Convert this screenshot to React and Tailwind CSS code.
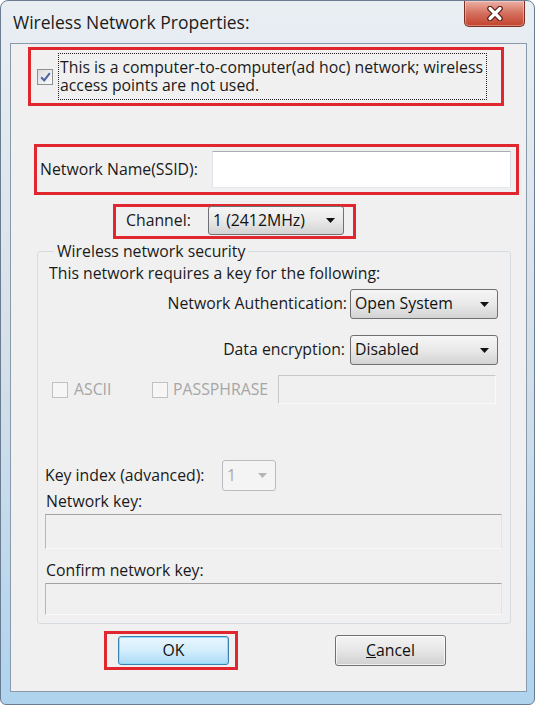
// App.jsx — Vista style "Wireless Network Properties" dialog

const red = "border-[3px] border-[#e0262e]";

function Check({ checked = false, disabled = false }) {
  return (
    <div
      className={`w-[16px] h-[16px] flex-shrink-0 border flex items-center justify-center ${
        disabled
          ? "border-[#c2c2c2] bg-[#f6f6f6]"
          : "border-[#8e8f8f] bg-linear-to-br from-[#dcdcdc] to-[#fbfbfb]"
      }`}
    >
      {checked && (
        <svg width="11" height="10" viewBox="0 0 11 10">
          <path d="M1.2 5.2l3 3.2L9.8 1.2" stroke="#4a62a6" strokeWidth="2" fill="none" />
        </svg>
      )}
    </div>
  );
}

function Combo({ value, className = "", disabled = false }) {
  return (
    <div
      className={`flex items-center justify-between rounded-[3px] border pl-[4px] pr-[8px] ${
        disabled
          ? "border-[#b9bdc1] bg-[#f4f4f4] text-[#a9a9a9]"
          : "border-[#707070] bg-linear-to-b from-[#f6f6f6] via-[#e9e9e9] to-[#d3d3d3] text-[#111]"
      } ${className}`}
    >
      <span className="leading-none">{value}</span>
      <svg width="9" height="5" viewBox="0 0 9 5">
        <path d="M0 0h9L4.5 5z" fill={disabled ? "#b4b4b4" : "#111"} />
      </svg>
    </div>
  );
}

function Field({ className = "" }) {
  return (
    <div
      className={`border border-t-[#a4a4a4] border-l-[#b6b6b6] border-r-[#e4e4e4] border-b-[#fafafa] bg-[#f0f0f0] ${className}`}
    />
  );
}

export default function App() {
  return (
    <div className="w-[538px] h-[712px] bg-white font-['Open_Sans',sans-serif] text-[15.8px] text-[#1a1a1a]">
      <div className="w-[535px] h-[705px] rounded-t-[8px] rounded-b-[6px] border border-[#6a7d90] bg-linear-to-b from-[#e9eef3] via-[#d6e0e9] to-[#afd3ee] flex flex-col">
        {/* title bar */}
        <div className="h-[42px] flex items-start justify-between">
          <div className="pl-[12px] pt-[9px] text-[17.5px] leading-[24px] text-[#1b1b1b]">
            Wireless Network Properties:
          </div>
          <div className="mr-[9px] w-[61px] h-[26px] rounded-b-[5px] border border-t-0 border-[#7c2e22] bg-linear-to-b from-[#eab0a4] via-[#d46e5c] to-[#c2422c] shadow-[inset_0_0_0_1px_rgba(255,255,255,0.35)] flex items-center justify-center">
            <svg width="18" height="15" viewBox="0 0 18 15">
              <path d="M4 2.5l10 10M14 2.5l-10 10" stroke="#5a1a12" strokeWidth="5.5" strokeLinecap="round" />
              <path d="M4 2.5l10 10M14 2.5l-10 10" stroke="#fff" strokeWidth="3.2" strokeLinecap="round" />
            </svg>
          </div>
        </div>

        {/* client area */}
        <div className="ml-[9px] w-[517px] h-[649px] border border-[#8799ab] bg-[#f0f0f0] flex flex-col">
          {/* ad hoc */}
          <div className={`ml-[17px] mt-[3px] w-[476px] h-[59px] ${red} flex items-center`}>
            <div className="ml-[6px]">
              <Check checked />
            </div>
            <div className="ml-[5px] w-[429px] h-[47px] border border-dotted border-[#222] pl-[1px] pt-[4px] leading-[18px]">
              This is a computer-to-computer(ad hoc) network; wireless access points are not used.
            </div>
          </div>

          {/* SSID */}
          <div className={`ml-[23px] mt-[38px] w-[485px] h-[51px] ${red} flex items-center`}>
            <span className="ml-[3px] w-[172px]">Network Name(SSID):</span>
            <div className="w-[299px] h-[37px] bg-white border border-[#abadb3] border-l-[#e2e3ea] border-r-[#dbdfe6] border-b-[#e3e9ef]" />
          </div>

          {/* channel */}
          <div className={`ml-[102px] mt-[9px] w-[243px] h-[35px] ${red} flex items-start`}>
            <span className="ml-[10px] mt-[2px] w-[82px]">Channel:</span>
            <Combo value="1 (2412MHz)" className="w-[136px] h-[29px] -mt-[1px]" />
          </div>

          {/* security group */}
          <fieldset className="ml-[26px] mt-[2px] w-[474px] border border-[#d5dbe0] rounded-[3px] pl-[7px] pr-[8px] pb-[8px] flex flex-col">
            <legend className="ml-[9px] px-[3px] leading-[20px]">Wireless network security</legend>
            <div className="ml-[4px] mt-[2px] leading-[20px]">This network requires a key for the following:</div>

            <div className="mt-[6px] flex items-center justify-end pr-[4px]">
              <span className="mr-[3px]">Network Authentication:</span>
              <Combo value="Open System" className="w-[148px] h-[30px]" />
            </div>
            <div className="mt-[16px] flex items-center justify-end pr-[4px]">
              <span className="mr-[5px]">Data encryption:</span>
              <Combo value="Disabled" className="w-[148px] h-[30px]" />
            </div>

            <div className="mt-[10px] flex items-center text-[#a6a6a6]">
              <div className="ml-[7px]">
                <Check disabled />
              </div>
              <span className="ml-[6px] w-[78px]">ASCII</span>
              <Check disabled />
              <span className="ml-[5px] w-[105px]">PASSPHRASE</span>
              <div className="w-[218px] h-[29px] border border-[#c8c8c8] border-b-[#fafafa] border-r-[#fafafa] bg-[#f0f0f0]" />
            </div>

            <div className="mt-[56px] flex items-center">
              <span className="w-[177px]">Key index (advanced):</span>
              <Combo value="1" disabled className="w-[54px] h-[31px]" />
            </div>
            <div className="ml-[1px] leading-[20px]">Network key:</div>
            <Field className="mt-[3px] h-[35px]" />
            <div className="ml-[1px] mt-[11px] leading-[20px]">Confirm network key:</div>
            <Field className="mt-[3px] h-[32px]" />
          </fieldset>

          {/* buttons */}
          <div className="mt-[7px] flex items-center">
            <div className={`ml-[93px] ${red} pl-[11px] pr-[6px] py-[2px]`}>
              <button className="w-[111px] h-[29px] rounded-[3px] border border-[#3c7fb1] bg-linear-to-b from-[#eaf6fd] via-[#d3eefc] to-[#a9dbf6] shadow-[inset_0_0_0_1px_#8fdcfa] text-[#111]">
                OK
              </button>
            </div>
            <button className="ml-[97px] w-[111px] h-[31px] rounded-[3px] border border-[#707070] bg-linear-to-b from-[#f4f4f4] via-[#e6e6e6] to-[#d0d0d0] shadow-[inset_0_0_0_1px_rgba(255,255,255,0.7)] text-[#111]">
              <span className="underline">C</span>ancel
            </button>
          </div>
        </div>
      </div>
    </div>
  );
}
